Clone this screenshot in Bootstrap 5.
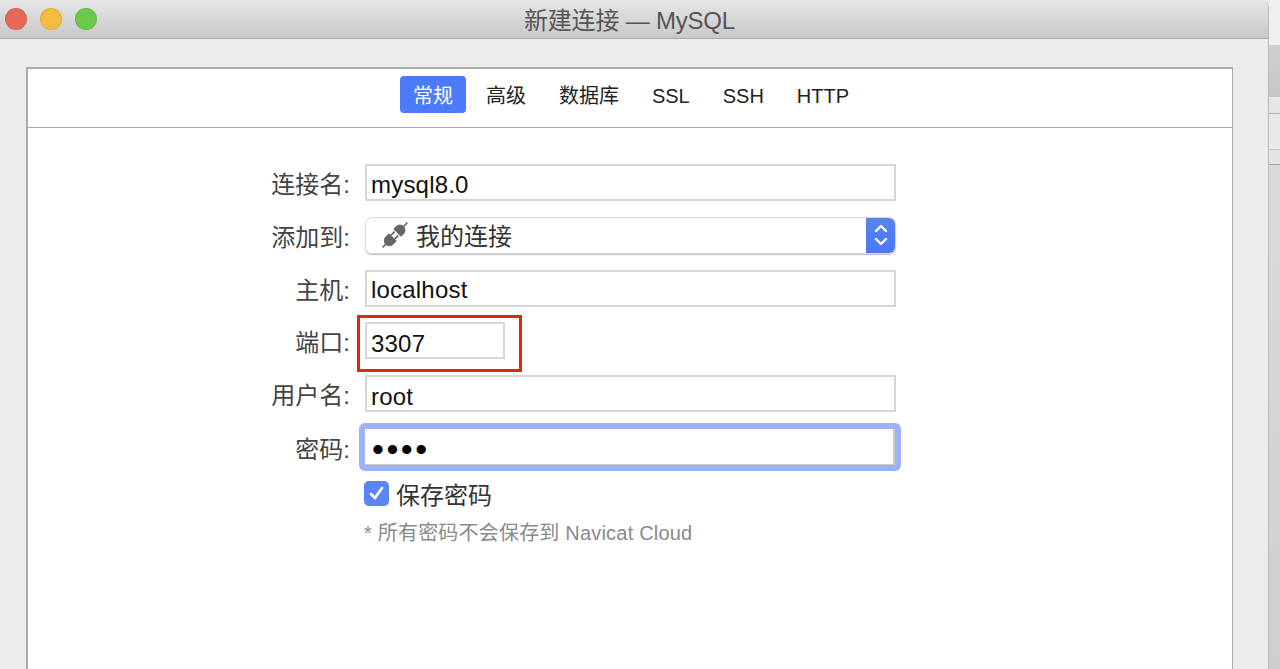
<!DOCTYPE html>
<html lang="zh">
<head>
<meta charset="utf-8">
<title>新建连接 — MySQL</title>
<link href="https://cdn.jsdelivr.net/npm/bootstrap@5.3.0/dist/css/bootstrap.min.css" rel="stylesheet">
<style>
html,body{height:669px;overflow:hidden}
body{background:#ececec;font-family:"Liberation Sans","Noto Sans CJK SC",sans-serif;color:#222}
.winwrap{height:669px}
.appwin{width:1269px;height:669px;background:#ececec;border-right:1px solid #b9b9b9;border-top-right-radius:8px;overflow:hidden}
.sidestrip{width:11px;height:669px;background:linear-gradient(#dedede,#cfcfcf)}
.sbit1{height:45px;background:#efefef}
.sbit2{height:52px;background:linear-gradient(#d0d0d0,#c6c6c6)}
.sbit3{height:17px;background:#e6e6e6;border-bottom:1px solid #b4b4b4}
.sbit4{height:36px;background:#e9e9e9;border-bottom:1px solid #c4c4c4}
.sbit5{height:15px;background:#e4e4e4;border-bottom:1px solid #a6a6a6}
.titlebar{height:39px;background:linear-gradient(#e6e6e6,#c8c8c8);border-bottom:1px solid #a9a9a9;padding-left:5px}
.wintitle{left:0;right:9px;top:0;line-height:42px;text-align:center;font-size:24px;color:#555;letter-spacing:-.2px}
.light{width:22px;height:22px;border-radius:50%;margin-right:13px;border:1px solid rgba(0,0,0,.08)}
.lred{background:#e8695c}.lyellow{background:#f2bd3f}.lgreen{background:#6cc84b}
.dlgpanel{margin:28px 35px 0 26px;height:640px;background:#fff;border:solid #ababab;border-width:2px 1px 0 2px}
.tabbar{height:59px;border-bottom:1px solid #a8a8a8;gap:7px;padding:7px 0 0 2px}
.tabbar .nav-link{height:37px;padding:0 13px;line-height:40px;font-size:20px;color:#222;border-radius:4px}
.tabbar .nav-link.active{background:#4c7bf8;color:#fff}
.fieldrows{padding-top:36px;gap:14.8px}
.fieldrow{height:38px}
.fieldlabel{width:322px;text-align:right;font-size:24px;color:#444;line-height:42px;margin-right:15px}
.formbox.form-control{width:531px;height:37px;padding:5px 4px 0;border:2px solid #d6d6d6;border-radius:0;font-size:24px;letter-spacing:.2px;color:#111;box-shadow:none}
.formbox.form-control.texthigh{padding-top:3px}
.formbox.form-control.textlow{padding-top:7px}
.formbox.portbox{width:140px}
.portwrap{width:140px;height:38px}
.redmark{left:-8px;top:-7px;width:165px;height:57px;border:3px solid #dc2a0e;pointer-events:none}
.pickbox{width:531px;height:37px;border:1px solid #d9d9d9;border-radius:7px;font-size:24px;color:#333;padding-left:16px;box-shadow:0 1px 1px #bbb;overflow:hidden}
.picktext{margin-left:8px;line-height:38px}
.pickarrow{width:29px;margin-top:-1px;margin-bottom:-1px;background:linear-gradient(#5a84f0,#4a78f8)}
.pwdrow{margin-top:1px}
.pwdring{width:542px;height:48px;margin-left:-6px;margin-top:-6px;border-radius:6px;background:#9db1f8;padding:6px}
.pwdring .formbox.form-control{font-size:34px;letter-spacing:2.5px;height:36px;border:0;border-bottom:1px solid #c9c9c9;border-right:2px solid #c9c9c9;line-height:36px;padding:5px 7px 0;color:#000}
.savecheck{margin-left:336px;margin-top:-3.3px;height:30px}
.tickbox{width:25px;height:25px;border-radius:5px;background:#5b84f4;margin-right:7px}
.savetext{font-size:24px;color:#333;line-height:30px;padding-top:5px}
.hintline{margin-left:336px;margin-top:11.5px;font-size:20px;line-height:26px;color:#8a8a8a;letter-spacing:.2px}
</style>
</head>
<body>
<div class="winwrap d-flex">
  <div class="appwin">
    <header class="titlebar d-flex align-items-center position-relative">
      <span class="light lred"></span><span class="light lyellow"></span><span class="light lgreen"></span>
      <div class="wintitle position-absolute">新建连接 — MySQL</div>
    </header>
    <section class="dlgpanel">
      <ul class="nav tabbar justify-content-center">
        <li class="nav-item"><a class="nav-link active" href="#">常规</a></li>
        <li class="nav-item"><a class="nav-link" href="#">高级</a></li>
        <li class="nav-item"><a class="nav-link" href="#">数据库</a></li>
        <li class="nav-item"><a class="nav-link" href="#">SSL</a></li>
        <li class="nav-item"><a class="nav-link" href="#">SSH</a></li>
        <li class="nav-item"><a class="nav-link" href="#">HTTP</a></li>
      </ul>
      <form class="fieldrows d-flex flex-column">
        <div class="fieldrow d-flex"><label class="fieldlabel">连接名:</label><input class="form-control formbox" value="mysql8.0"></div>
        <div class="fieldrow d-flex"><label class="fieldlabel">添加到:</label>
          <div class="pickbox d-flex align-items-stretch">
            <svg class="align-self-center flex-shrink-0" width="26" height="26" viewBox="0 0 26 26" aria-hidden="true"><g fill="#666" transform="rotate(-45 13 13)"><rect x="-4.500" y="12.200" width="5.500" height="1.600"/><path d="M5 7.500h5v11H5a5.500 5.500 0 0 1 0-11z"/><rect x="10" y="9.500" width="5" height="1.700"/><rect x="10" y="14.800" width="5" height="1.700"/><path d="M16 7.500h4a5.500 5.500 0 0 1 0 11h-4z"/><rect x="25" y="12.200" width="5.500" height="1.600"/></g></svg>
            <span class="picktext flex-grow-1">我的连接</span>
            <span class="pickarrow d-flex align-items-center justify-content-center"><svg width="16" height="26" viewBox="0 0 16 26" fill="none" stroke="#fff" stroke-width="2.400" stroke-linecap="round" stroke-linejoin="round" aria-hidden="true"><path d="M3 9l5-5 5 5M3 17l5 5 5-5"/></svg></span>
          </div>
        </div>
        <div class="fieldrow d-flex"><label class="fieldlabel">主机:</label><input class="form-control formbox texthigh" value="localhost"></div>
        <div class="fieldrow d-flex"><label class="fieldlabel">端口:</label><div class="portwrap position-relative"><input class="form-control formbox portbox textlow" value="3307"><span class="redmark position-absolute"></span></div></div>
        <div class="fieldrow d-flex"><label class="fieldlabel">用户名:</label><input class="form-control formbox textlow" value="root"></div>
        <div class="fieldrow pwdrow d-flex"><label class="fieldlabel">密码:</label><div class="pwdring"><input class="form-control formbox w-100" type="password" value="1234"></div></div>
        <div class="savecheck d-flex align-items-center"><span class="tickbox d-flex align-items-center justify-content-center"><svg width="19" height="19" viewBox="0 0 19 19" fill="none" stroke="#fff" stroke-width="2.600" stroke-linecap="round" stroke-linejoin="round" aria-hidden="true"><path d="M4 10l4 4 7-10"/></svg></span><span class="savetext">保存密码</span></div>
      </form>
      <div class="hintline">* 所有密码不会保存到 Navicat Cloud</div>
    </section>
  </div>
  <aside class="sidestrip">
    <div class="sbit1"></div><div class="sbit2"></div><div class="sbit3"></div><div class="sbit4"></div><div class="sbit5"></div>
  </aside>
</div>
<script src="https://cdn.jsdelivr.net/npm/bootstrap@5.3.0/dist/js/bootstrap.bundle.min.js"></script>
</body>
</html>
